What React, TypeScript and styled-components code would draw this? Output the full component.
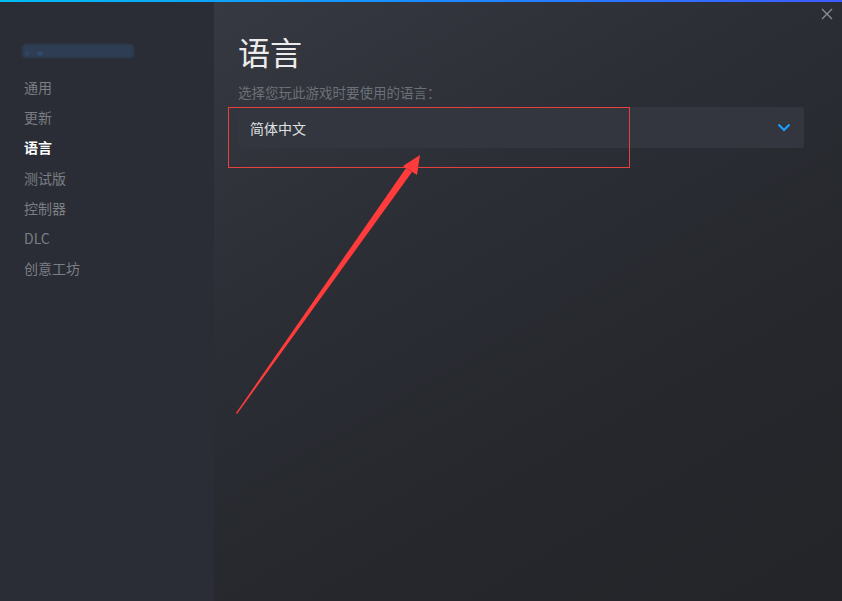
import styled, { createGlobalStyle } from "styled-components";

const GlobalStyle = createGlobalStyle`
  html, body {
    margin: 0;
    padding: 0;
    background: #24262b;
  }
  body {
    font-family: "Noto Sans CJK SC", "Noto Sans", sans-serif;
  }
`;

// 좌측 메뉴
const menuItems = ["通用", "更新", "语言", "测试版", "控制器", "DLC", "创意工坊"];
const activeItem = "语言";

const App = () => {
  return (
    <>
      <GlobalStyle />
      <Window>
        <TopLine />
        <Body>
          <Sidebar>
            <BlurredTitle>
              <Dots />
            </BlurredTitle>
            <Menu>
              {menuItems.map((item) => (
                <MenuItem key={item} $active={item === activeItem}>
                  {item}
                </MenuItem>
              ))}
            </Menu>
          </Sidebar>
          <Content>
            <CloseButton aria-label="close">
              <svg width="12" height="12" viewBox="0 0 12 12">
                <path d="M1 1 L11 11 M11 1 L1 11" stroke="#8a9096" strokeWidth="1.3" />
              </svg>
            </CloseButton>
            <Title>语言</Title>
            <Subtitle>选择您玩此游戏时要使用的语言：</Subtitle>
            <Select>
              <span>简体中文</span>
              <svg width="14" height="9" viewBox="0 0 14 9">
                <path d="M1.5 1.5 L7 7 L12.5 1.5" stroke="#1a9fff" strokeWidth="2.2" fill="none" />
              </svg>
            </Select>
            {/* 빨간 표시 (주석) */}
            <Highlight />
            <Arrow width="842" height="601" viewBox="0 0 842 601">
              <path d="M236 413 L237 414 L412 172 L406 168 Z" fill="#ff3b3b" />
              <path d="M420 155 L403 166 L417 175 Z" fill="#ff3b3b" />
            </Arrow>
          </Content>
        </Body>
      </Window>
    </>
  );
};

export default App;

const Window = styled.div`
  width: 842px;
  height: 601px;
  display: flex;
  flex-direction: column;
  overflow: hidden;
  position: relative;
`;

const TopLine = styled.div`
  height: 2px;
  background: linear-gradient(90deg, #00bdf2 0%, #1a8cff 50%, #3d5cff 100%);
`;

const Body = styled.div`
  flex: 1;
  display: flex;
`;

const Sidebar = styled.div`
  width: 214px;
  background: #2a2d35;
  padding: 42px 0 0 24px;
  box-sizing: border-box;
`;

const BlurredTitle = styled.div`
  width: 112px;
  height: 14px;
  margin-left: -2px;
  border-radius: 4px;
  background: #2e3d53;
  filter: blur(0.8px);
  position: relative;
`;

const Dots = styled.div`
  position: absolute;
  left: 4px;
  top: 9px;
  width: 10px;
  height: 1px;
  border-left: 2px solid #3a78c9;
  border-right: 4px solid #3a78c9;
`;

const Menu = styled.div`
  margin-top: 14px;
  display: flex;
  flex-direction: column;
`;

const MenuItem = styled.div<{ $active: boolean }>`
  height: 30.2px;
  line-height: 30px;
  font-size: 14px;
  color: ${(p) => (p.$active ? "#ffffff" : "#7b7e84")};
  font-weight: ${(p) => (p.$active ? 700 : 400)};
`;

const Content = styled.div`
  flex: 1;
  position: relative;
  padding: 28px 38px 0 24px;
  background: linear-gradient(150deg, #363941 0%, #2b2e35 35%, #25272c 70%, #232529 100%);
`;

const CloseButton = styled.div`
  position: absolute;
  top: 6px;
  right: 9px;
  width: 12px;
  height: 12px;
  display: flex;
`;

const Title = styled.div`
  font-size: 32px;
  line-height: 42px;
  color: #ececec;
  font-weight: 400;
`;

const Subtitle = styled.div`
  margin-top: 10px;
  font-size: 13.5px;
  line-height: 20px;
  color: #6c7077;
`;

const Select = styled.div`
  margin-top: 5px;
  height: 41px;
  border-radius: 3px;
  background: #33363e;
  display: flex;
  align-items: center;
  justify-content: space-between;
  padding: 0 13px 0 12px;
  font-size: 14px;
  color: #dfe1e3;
`;

const Highlight = styled.div`
  position: absolute;
  left: 14px;
  top: 105px;
  width: 402px;
  height: 61px;
  box-sizing: border-box;
  border: 1px solid #e8403f;
  pointer-events: none;
`;

const Arrow = styled.svg`
  position: absolute;
  left: -214px;
  top: -2px;
  pointer-events: none;
`;
